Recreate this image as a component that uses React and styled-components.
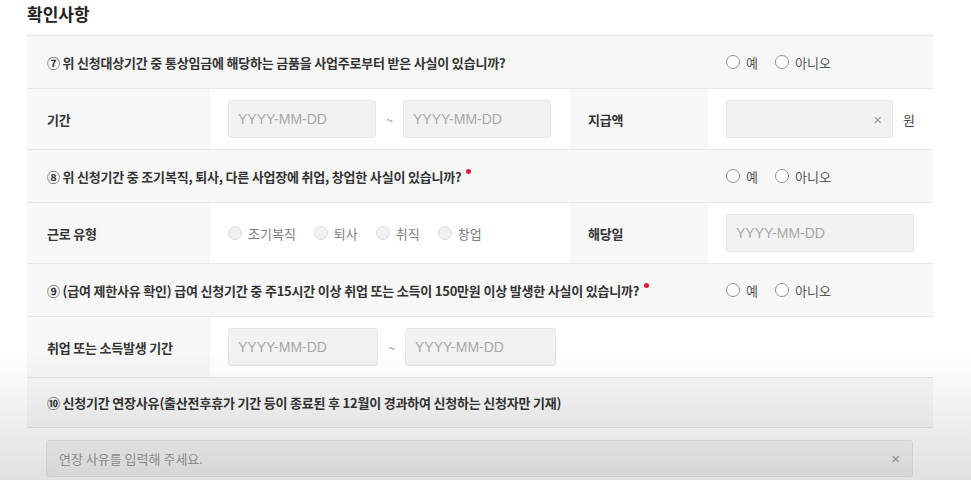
import React from 'react';
import styled, { createGlobalStyle } from 'styled-components';

const GlobalStyle = createGlobalStyle`
	body {
		margin: 0;
		background: #fff;
		font-family: 'Noto Sans CJK KR', 'Noto Sans', sans-serif;
		color: #333;
	}
`;

const Page = styled.div`
	position: relative;
	width: 971px;
	height: 480px;
	overflow: hidden;
	padding: 0 38px 0 27px;
	box-sizing: border-box;
`;

const Shade = styled.div`
	position: absolute;
	left: 0;
	right: 0;
	bottom: 0;
	height: 130px;
	pointer-events: none;
	background: linear-gradient(to bottom, rgba(0, 0, 0, 0), rgba(0, 0, 0, 0.12));
`;

const Title = styled.h2`
	margin: 0;
	height: 35px;
	font-size: 17px;
	font-weight: 700;
	line-height: 28px;
	color: #222;
`;

const Table = styled.div`
	border-top: 1px solid #e2e2e2;
`;

const QuestionRow = styled.div`
	display: grid;
	grid-template-columns: 681px 1fr;
	align-items: center;
	height: ${(props) => props.height || 52}px;
	background: #f7f7f7;
	border-bottom: 1px solid #e6e6e6;
`;

const Question = styled.div`
	padding-left: 20px;
	font-size: 13px;
	font-weight: 700;
	color: #333;
	letter-spacing: -0.2px;
	white-space: nowrap;
`;

const Required = styled.span`
	display: inline-block;
	width: 5px;
	height: 5px;
	border-radius: 50%;
	background: #e3173f;
	margin-left: 5px;
	vertical-align: top;
	margin-top: 2px;
`;

const RadioGroup = styled.div`
	display: flex;
	align-items: center;
	gap: ${(props) => props.gap ?? 17}px;
	padding-left: ${(props) => props.indent ?? 18}px;
`;

const RadioItem = styled.label`
	display: flex;
	align-items: center;
	gap: 6px;
	font-size: 13px;
	color: ${(props) => (props.disabled ? '#7d7d7d' : '#555')};
`;

const Circle = styled.span`
	width: 14px;
	height: 14px;
	border-radius: 50%;
	box-sizing: border-box;
	border: 1px solid ${(props) => (props.disabled ? '#dcdcdc' : '#8f8f8f')};
	background: ${(props) => (props.disabled ? '#f1f1f1' : '#fff')};
`;

const DataRow = styled.div`
	display: grid;
	grid-template-columns: 183px 360px 138px 1fr;
	height: 60px;
	border-bottom: 1px solid #e6e6e6;
`;

const LabelCell = styled.div`
	display: flex;
	align-items: center;
	padding-left: ${(props) => props.indent ?? 20}px;
	background: #f7f7f7;
	font-size: 13px;
	font-weight: 700;
	letter-spacing: -0.2px;
	color: #333;
`;

const ValueCell = styled.div`
	display: flex;
	align-items: center;
	padding: 0 18px;
	background: #fff;
	grid-column: ${(props) => (props.wide ? 'span 3' : 'auto')};
`;

const DateBox = styled.div`
	width: ${(props) => props.width || 148}px;
	height: 38px;
	box-sizing: border-box;
	display: flex;
	align-items: center;
	justify-content: space-between;
	padding: 0 10px 0 9px;
	background: #f2f2f2;
	border: 1px solid #e6e6e6;
	border-radius: 3px;
	font-size: 14px;
	color: #a8a8a8;
	font-family: 'Liberation Sans', 'Noto Sans CJK KR', sans-serif;
`;

const Tilde = styled.span`
	width: 27px;
	text-align: center;
	font-size: 12px;
	color: #888;
`;

const Clear = styled.span`
	font-size: 15px;
	color: #999;
	font-family: 'Liberation Sans', sans-serif;
`;

const Unit = styled.span`
	margin-left: 10px;
	font-size: 13px;
	color: #444;
`;

const MemoRow = styled.div`
	padding: 12px 20px 0 19px;
`;

const MemoBox = styled(DateBox)`
	width: 100%;
	height: 37px;
	padding: 0 12px 0 12px;
	background: #f4f4f4;
	font-family: 'Noto Sans CJK KR', sans-serif;
	font-size: 13px;
	color: #9a9a9a;
`;

const YesNo = () => (
	<RadioGroup>
		<RadioItem><Circle />예</RadioItem>
		<RadioItem><Circle />아니오</RadioItem>
	</RadioGroup>
);

const Range = ({ widths = [148, 148] }) => (
	<>
		<DateBox width={widths[0]}>YYYY-MM-DD</DateBox>
		<Tilde>~</Tilde>
		<DateBox width={widths[1]}>YYYY-MM-DD</DateBox>
	</>
);

const workTypes = ['조기복직', '퇴사', '취직', '창업'];

export default function App() {
	return (
		<Page>
			<GlobalStyle />
			<Title>확인사항</Title>
			<Table>
				<QuestionRow>
					<Question>⑦ 위 신청대상기간 중 통상임금에 해당하는 금품을 사업주로부터 받은 사실이 있습니까?</Question>
					<YesNo />
				</QuestionRow>
				<DataRow>
					<LabelCell>기간</LabelCell>
					<ValueCell><Range /></ValueCell>
					<LabelCell indent={18}>지급액</LabelCell>
					<ValueCell>
						<DateBox width={167}><span /><Clear>×</Clear></DateBox>
						<Unit>원</Unit>
					</ValueCell>
				</DataRow>
				<QuestionRow>
					<Question>⑧ 위 신청기간 중 조기복직, 퇴사, 다른 사업장에 취업, 창업한 사실이 있습니까?<Required /></Question>
					<YesNo />
				</QuestionRow>
				<DataRow>
					<LabelCell>근로 유형</LabelCell>
					<ValueCell>
						<RadioGroup indent={0} gap={18}>
							{workTypes.map((t) => (
								<RadioItem key={t} disabled><Circle disabled />{t}</RadioItem>
							))}
						</RadioGroup>
					</ValueCell>
					<LabelCell indent={18}>해당일</LabelCell>
					<ValueCell><DateBox width={188}>YYYY-MM-DD</DateBox></ValueCell>
				</DataRow>
				<QuestionRow>
					<Question>⑨ (급여 제한사유 확인) 급여 신청기간 중 주15시간 이상 취업 또는 소득이 150만원 이상 발생한 사실이 있습니까?<Required /></Question>
					<YesNo />
				</QuestionRow>
				<DataRow>
					<LabelCell>취업 또는 소득발생 기간</LabelCell>
					<ValueCell wide><Range widths={[150, 151]} /></ValueCell>
				</DataRow>
				<QuestionRow height={49}>
					<Question>⑩ 신청기간 연장사유(출산전후휴가 기간 등이 종료된 후 12월이 경과하여 신청하는 신청자만 기재)</Question>
				</QuestionRow>
			</Table>
			<MemoRow>
				<MemoBox>연장 사유를 입력해 주세요.<Clear>×</Clear></MemoBox>
			</MemoRow>
			<Shade />
		</Page>
	);
}
